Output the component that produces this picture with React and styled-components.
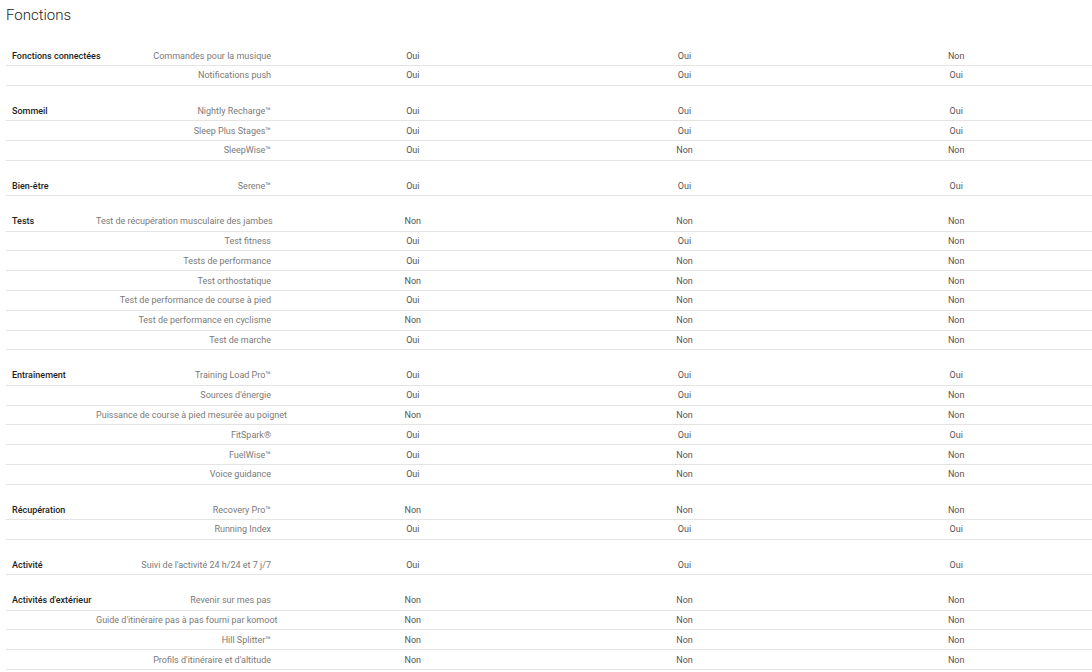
import React from 'react';
import styled, {createGlobalStyle} from 'styled-components';

const GlobalStyle = createGlobalStyle`
  html, body {
    margin: 0;
    padding: 0;
    background: #ffffff;
  }
  body {
    font-family: Roboto, "Liberation Sans", sans-serif;
    -webkit-font-smoothing: antialiased;
  }
`;

const Page = styled.div`
  width: 1092px;
  padding: 0 0 0 6px;
  box-sizing: border-box;
`;

const Title = styled.h2`
  margin: 0;
  padding-top: 6px;
  font-size: 15px;
  line-height: 18px;
  font-weight: 300;
  color: #222;
`;

const Table = styled.div`
  padding-top: 6.6px;
`;

const Section = styled.div`
  margin-top: 15.6px;
`;

const Row = styled.div`
  display: grid;
  grid-template-columns: 90px 181px repeat(3, 1fr);
  align-items: center;
  height: 19.8px;
  box-sizing: border-box;
  border-bottom: 1px solid #e4e4e4;
  font-size: 9px;
  line-height: 12px;
`;

const Group = styled.div`
  padding-left: 6px;
  font-weight: 500;
  color: #1e1e1e;
  white-space: nowrap;
`;

const Feature = styled.div`
  padding-right: 6px;
  text-align: right;
  color: #7a7a7a;
  white-space: nowrap;
`;

const Value = styled.div`
  text-align: center;
  color: #555;
`;

const sections = [
  {
    name: 'Fonctions connectées',
    rows: [
      ['Commandes pour la musique', 'Oui', 'Oui', 'Non'],
      ['Notifications push', 'Oui', 'Oui', 'Oui']
    ]
  },
  {
    name: 'Sommeil',
    rows: [
      ['Nightly Recharge™', 'Oui', 'Oui', 'Oui'],
      ['Sleep Plus Stages™', 'Oui', 'Oui', 'Oui'],
      ['SleepWise™', 'Oui', 'Non', 'Non']
    ]
  },
  {
    name: 'Bien-être',
    rows: [['Serene™', 'Oui', 'Oui', 'Oui']]
  },
  {
    name: 'Tests',
    rows: [
      ['Test de récupération musculaire des jambes', 'Non', 'Non', 'Non'],
      ['Test fitness', 'Oui', 'Oui', 'Non'],
      ['Tests de performance', 'Oui', 'Non', 'Non'],
      ['Test orthostatique', 'Non', 'Non', 'Non'],
      ['Test de performance de course à pied', 'Oui', 'Non', 'Non'],
      ['Test de performance en cyclisme', 'Non', 'Non', 'Non'],
      ['Test de marche', 'Oui', 'Non', 'Non']
    ]
  },
  {
    name: 'Entraînement',
    rows: [
      ['Training Load Pro™', 'Oui', 'Oui', 'Oui'],
      ["Sources d'énergie", 'Oui', 'Oui', 'Non'],
      ['Puissance de course à pied mesurée au poignet', 'Non', 'Non', 'Non'],
      ['FitSpark®', 'Oui', 'Oui', 'Oui'],
      ['FuelWise™', 'Oui', 'Non', 'Non'],
      ['Voice guidance', 'Oui', 'Non', 'Non']
    ]
  },
  {
    name: 'Récupération',
    rows: [
      ['Recovery Pro™', 'Non', 'Non', 'Non'],
      ['Running Index', 'Oui', 'Oui', 'Oui']
    ]
  },
  {
    name: 'Activité',
    rows: [["Suivi de l'activité 24 h/24 et 7 j/7", 'Oui', 'Oui', 'Oui']]
  },
  {
    name: "Activités d'extérieur",
    rows: [
      ['Revenir sur mes pas', 'Non', 'Non', 'Non'],
      ["Guide d'itinéraire pas à pas fourni par komoot", 'Non', 'Non', 'Non'],
      ['Hill Splitter™', 'Non', 'Non', 'Non'],
      ["Profils d'itinéraire et d'altitude", 'Non', 'Non', 'Non']
    ]
  }
];

const App = () => (
  <Page>
    <GlobalStyle />
    <Title>Fonctions</Title>
    <Table>
      {sections.map(section => (
        <Section key={section.name}>
          {section.rows.map(([feature, ...values], i) => (
            <Row key={feature}>
              <Group>{i === 0 ? section.name : ''}</Group>
              <Feature>{feature}</Feature>
              {values.map((v, j) => (
                <Value key={j}>{v}</Value>
              ))}
            </Row>
          ))}
        </Section>
      ))}
    </Table>
  </Page>
);

export default App;
